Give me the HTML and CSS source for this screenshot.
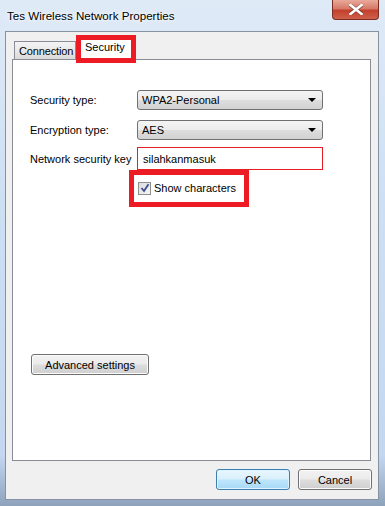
FILE: index.html
```html
<!DOCTYPE html>
<html lang="en">
<head>
    <meta charset="UTF-8">
    <meta name="viewport" content="width=device-width, initial-scale=1.0">
    <title>Tes Wireless Network Properties</title>
    <link rel="stylesheet" href="styles.css">
</head>
<body>
    <div class="window">
        <div class="titlebar">
            <span class="title">Tes Wireless Network Properties</span>
            <div class="close-btn">
                <svg width="14" height="11" viewBox="0 0 14 11">
                    <path d="M1 1 L13 10 M13 1 L1 10" stroke="#4a2020" stroke-width="4" stroke-linecap="square" opacity="0.5"/>
                    <path d="M1.5 1 L12.5 10 M12.5 1 L1.5 10" stroke="#ffffff" stroke-width="2.6" stroke-linecap="square"/>
                </svg>
            </div>
        </div>

        <div class="client">
            <div class="tabs">
                <div class="tab">Connection</div>
                <div class="tab tab-active">Security</div>
            </div>

            <div class="panel">
                <div class="form-row">
                    <label class="form-label">Security type:</label>
                    <div class="combo">
                        <span>WPA2-Personal</span>
                        <span class="arrow"></span>
                    </div>
                </div>

                <div class="form-row row-enc">
                    <label class="form-label">Encryption type:</label>
                    <div class="combo">
                        <span>AES</span>
                        <span class="arrow"></span>
                    </div>
                </div>

                <div class="form-row row-key">
                    <label class="form-label">Network security key</label>
                    <div class="key-input">silahkanmasuk</div>
                </div>

                <div class="highlight">
                    <span class="checkbox">
                        <svg width="10" height="10" viewBox="0 0 10 10">
                            <path d="M1.5 5 L4 8 L8.5 1.2" fill="none" stroke="#3d4f8f" stroke-width="1.8"/>
                        </svg>
                    </span>
                    <span>Show characters</span>
                </div>

                <button class="btn btn-advanced">Advanced settings</button>
            </div>

            <div class="actions">
                <button class="btn btn-default">OK</button>
                <button class="btn">Cancel</button>
            </div>
        </div>
    </div>
</body>
</html>
```

FILE: styles.css
```css
body {
    margin: 0;
    width: 385px;
    height: 506px;
    overflow: hidden;
    font-family: "Liberation Sans", Arial, sans-serif;
    font-size: 11px;
    color: #000;
    background: linear-gradient(180deg, #dfeaf7 0%, #cddff3 40%, #c3d8f0 90%, #8ea3bb 100%);
}

.window {
    height: 506px;
    display: flex;
    flex-direction: column;
}

.titlebar {
    height: 31px;
    display: flex;
    justify-content: space-between;
    align-items: flex-start;
    flex-shrink: 0;
}

.title {
    margin-left: 7px;
    margin-top: 9px;
    font-size: 11.6px;
    text-shadow: 0 0 6px #ffffff, 0 0 3px #ffffff;
}

.close-btn {
    width: 45px;
    height: 19px;
    margin-right: 6px;
    border: 1px solid #7a2d20;
    border-top: none;
    border-radius: 0 0 4px 4px;
    background: linear-gradient(180deg, #e9a99b 0%, #d57a68 45%, #c2412c 55%, #d0604a 100%);
    display: flex;
    justify-content: center;
    align-items: center;
}

.client {
    flex: 1;
    margin: 0 6px 6px 5px;
    background: #f0f0f0;
    border: 1px solid #8592a3;
    display: flex;
    flex-direction: column;
}

.tabs {
    height: 27px;
    display: flex;
    align-items: flex-end;
    padding-left: 8px;
    flex-shrink: 0;
}

.tab {
    height: 18px;
    width: 62px;
    box-sizing: border-box;
    padding: 1px 0 0 4px;
    border: 1px solid #898c95;
    border-bottom: none;
    background: linear-gradient(180deg, #f3f3f3 0%, #e9e9e9 50%, #d9d9d9 100%);
    display: flex;
    align-items: center;
    white-space: nowrap;
    letter-spacing: -0.15px;
}

.tab-active {
    position: relative;
    z-index: 1;
    height: 28px;
    width: 60px;
    margin-bottom: -4px;
    border: 5px solid #ed1c24;
    background: #ffffff;
    padding: 0 0 4px 4px;
    letter-spacing: 0;
}

.panel {
    height: 402px;
    box-sizing: border-box;
    margin: 0 7px 0 6px;
    background: #ffffff;
    border: 1px solid #898c95;
    padding: 30px 0 0 17px;
    flex-shrink: 0;
}

.form-row {
    display: flex;
    align-items: center;
    height: 20px;
}

.row-enc {
    margin-top: 10px;
}

.row-key {
    margin-top: 7px;
    height: 23px;
}

.form-label {
    width: 107px;
    white-space: nowrap;
}

.combo {
    width: 186px;
    height: 20px;
    box-sizing: border-box;
    border: 1px solid #707070;
    border-radius: 3px;
    background: linear-gradient(180deg, #f4f4f4 0%, #ececec 48%, #dddddd 52%, #d2d2d2 100%);
    display: flex;
    align-items: center;
    justify-content: space-between;
    padding: 0 6px 0 4px;
}

.arrow {
    width: 0;
    height: 0;
    border-left: 4px solid transparent;
    border-right: 4px solid transparent;
    border-top: 4px solid #000;
}

.key-input {
    width: 186px;
    height: 23px;
    box-sizing: border-box;
    border: 1px solid #e81e25;
    padding-left: 5px;
    display: flex;
    align-items: center;
}

.highlight {
    width: 120px;
    height: 37px;
    box-sizing: border-box;
    margin-left: 99px;
    border: 5px solid #ed1c24;
    display: flex;
    align-items: center;
    padding: 0 0 1px 4px;
    white-space: nowrap;
}

.checkbox {
    width: 13px;
    height: 13px;
    box-sizing: border-box;
    border: 1px solid #8e8f8f;
    background: linear-gradient(135deg, #dcdcdc 0%, #f6f6f6 100%);
    display: flex;
    align-items: center;
    justify-content: center;
    margin-right: 3px;
}

.btn {
    font-family: "Liberation Sans", Arial, sans-serif;
    font-size: 11px;
    color: #000;
    height: 21px;
    border: 1px solid #707070;
    border-radius: 3px;
    background: linear-gradient(180deg, #f2f2f2 0%, #ebebeb 48%, #dddddd 52%, #cfcfcf 100%);
    box-shadow: inset 0 0 0 1px #fcfcfc;
    padding: 0;
    cursor: pointer;
}

.btn-advanced {
    display: block;
    width: 118px;
    margin: 147px 0 0 1px;
}

.actions {
    display: flex;
    justify-content: flex-end;
    gap: 8px;
    margin-top: 8px;
    padding-right: 6px;
}

.actions .btn {
    width: 74px;
}

.btn-default {
    border-color: #3c7fb1;
    background: linear-gradient(180deg, #eaf6fd 0%, #d9f0fc 48%, #bee6fd 52%, #a7d9f5 100%);
    box-shadow: inset 0 0 0 1px #dff3ff;
}
```
